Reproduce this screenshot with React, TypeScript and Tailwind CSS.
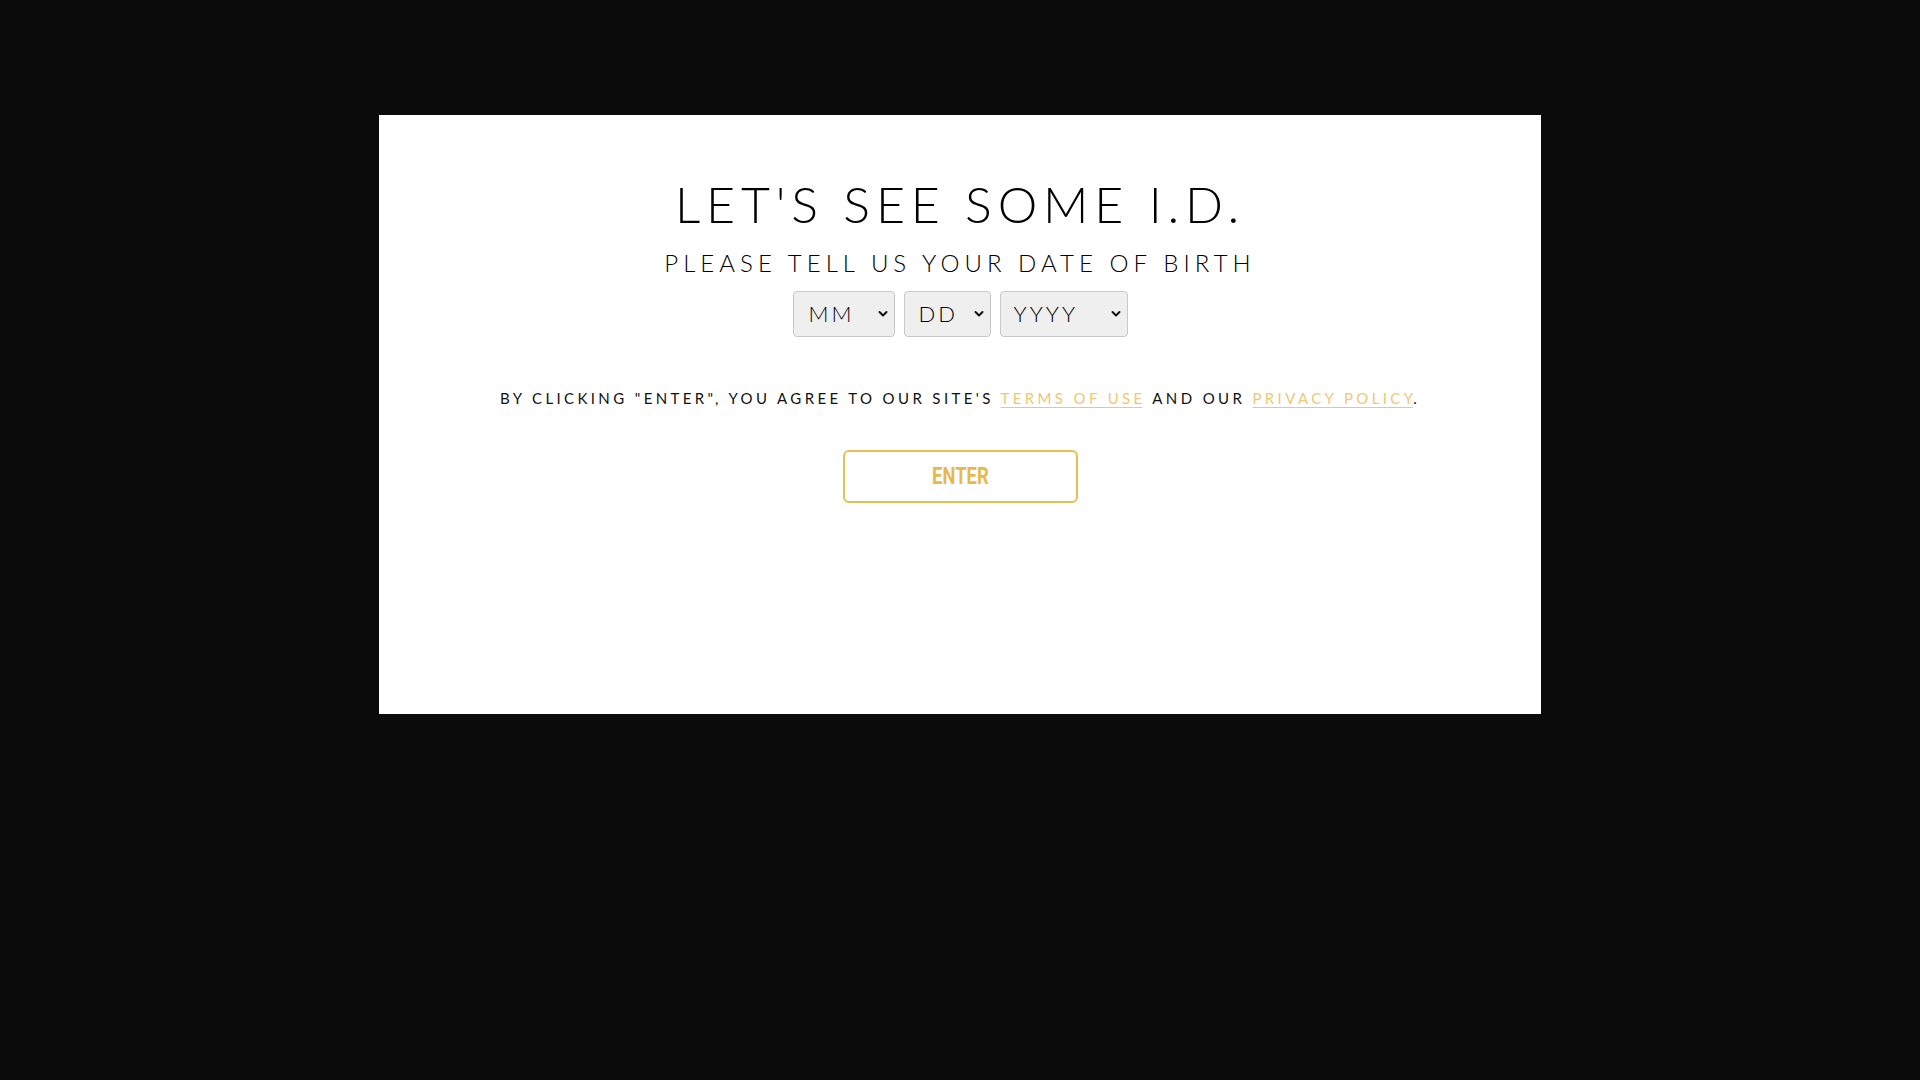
import React from "react";

function DateSelect({ label, width, pl }: { label: string; width: string; pl: string }) {
  return (
    <div className={`relative ${width} h-[46px]`}>
      <select
        className={`h-full w-full appearance-none rounded-[4px] border border-[#c9c9c9] bg-[#efefef] ${pl} text-left text-[22px] font-light leading-none tracking-[0.14em] text-black outline-none`}
        style={{ fontFamily: "Lato, 'Noto Sans', sans-serif" }}
        defaultValue=""
      >
        <option value="">{label}</option>
      </select>
      <svg
        className="pointer-events-none absolute right-[7px] top-1/2 -translate-y-1/2"
        width="10"
        height="7"
        viewBox="0 0 10 7"
        fill="none"
      >
        <path d="M1.5 1.5 L5 5 L8.5 1.5" stroke="#111" strokeWidth="2" strokeLinecap="round" strokeLinejoin="round" />
      </svg>
    </div>
  );
}

export default function App() {
  return (
    <div className="min-h-[1080px] w-full bg-[#0b0b0c]" style={{ fontFamily: "Lato, 'Noto Sans', sans-serif" }}>
      <div className="flex justify-center pt-[115px]">
        <div className="flex h-[599px] w-[1162px] flex-col items-center bg-white pt-[64px]">
          <h1 className="text-[50px] font-light leading-[50px] tracking-[0.117em] text-black">LET'S SEE SOME I.D.</h1>
          <p className="mt-[22px] text-[24px] font-light leading-[24px] tracking-[0.21em] text-black">
            PLEASE TELL US YOUR DATE OF BIRTH
          </p>
          <div className="mt-[16px] flex gap-[9px]">
            <DateSelect label="MM" width="w-[102px]" pl="pl-[15px]" />
            <DateSelect label="DD" width="w-[87px]" pl="pl-[14px]" />
            <DateSelect label="YYYY" width="w-[128px]" pl="pl-[13px]" />
          </div>
          <p className="mt-[54px] text-[15px] leading-[15px] tracking-[0.225em] text-[#111]">
            BY CLICKING "ENTER", YOU AGREE TO OUR SITE'S{" "}
            <a href="#" className="text-[#ecc874] underline underline-offset-[3px]">
              TERMS OF US<span className="mr-[0.225em] tracking-normal">E</span>
            </a>{" "}
            AND OUR{" "}
            <a href="#" className="text-[#ecc874] underline underline-offset-[3px]">
              PRIVACY POLIC<span className="mr-[0.225em] tracking-normal">Y</span>
            </a>
            <span className="-ml-[0.225em]">.</span>
          </p>
          <button className="mt-[44px] flex h-[53px] w-[235px] items-center justify-center rounded-[6px] border-2 border-[#e8bd55] bg-white">
            <span
              className="inline-block scale-x-[0.8] text-[23px] font-bold leading-none text-[#e6b94c]"
              style={{ fontFamily: "Roboto, 'Liberation Sans', sans-serif" }}
            >
              ENTER
            </span>
          </button>
        </div>
      </div>
    </div>
  );
}
